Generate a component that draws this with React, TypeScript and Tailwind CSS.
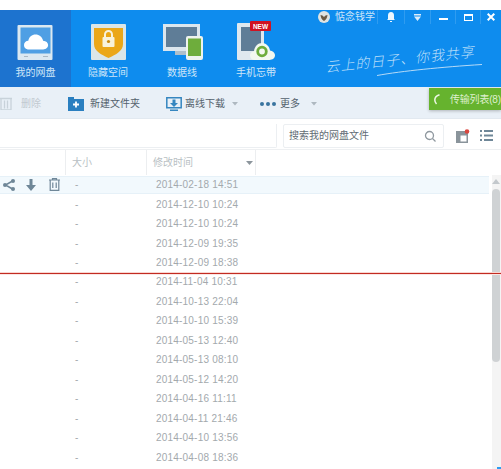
const rows = [
  "2014-02-18 14:51","2014-12-10 10:24","2014-12-10 10:24","2014-12-09 19:35","2014-12-09 18:38",
  "2014-11-04 10:31","2014-10-13 22:04","2014-10-10 15:39","2014-05-13 12:40","2014-05-13 08:10",
  "2014-05-12 14:20","2014-04-16 11:11","2014-04-11 21:46","2014-04-10 13:56","2014-04-08 18:36",
];

function Nav({ label, wide, active, children }: { label: string; wide?: boolean; active?: boolean; children: React.ReactNode }) {
  return (
    <div className={`${wide ? "w-[74px]" : "w-[71px]"} h-[77px] pt-[11px] flex flex-col items-center shrink-0 ${active ? "bg-[#1d73cf]" : ""}`}>
      <svg width="44" height="40" viewBox="0 0 44 40">{children}</svg>
      <div className="mt-[5px] text-[10px] leading-[14px] text-[#cfe6f8]">{label}</div>
    </div>
  );
}

function Caret() {
  return (
    <svg width="6" height="4" viewBox="0 0 6 4" className="shrink-0"><path d="M0 0h6L3 3.500z" fill="#aeb8c0" /></svg>
  );
}

function Ctl({ w, children }: { w: string; children: React.ReactNode }) {
  return <div className={`${w} h-[14px] border-l border-[#2f9cf0] flex items-center justify-center shrink-0`}>{children}</div>;
}

export default function App() {
  return (
    <div className="w-[501px] h-[469px] bg-white overflow-hidden relative flex flex-col" style={{ fontFamily: '"Liberation Sans","Noto Sans CJK SC",sans-serif' }}>
      <div className="h-[10px] shrink-0" />

      <div className="h-[77px] bg-[#0e8cee] flex shrink-0">
        <Nav label="我的网盘" active>
          <rect x="3.500" y="4" width="35" height="35" rx="1" fill="#dbe8f1" />
          <rect x="6.500" y="6.500" width="30" height="26" fill="#4f9fe4" />
          <rect x="10" y="35" width="4" height="1" fill="#a9b8c4" /><rect x="29" y="35" width="5" height="1" fill="#a9b8c4" />
          <path d="M15 28.500c-3.500 0-5-2.300-5-4.500 0-2.500 2-4.200 4.300-4.200 .6-4 3.700-6.300 7.200-6.300 3.800 0 6.800 2.500 7.600 6.200 3 .1 5 2 5 4.400s-2 4.400-5 4.400z" fill="#fff" />
        </Nav>
        <Nav label="隐藏空间" wide>
          <rect x="5" y="3" width="35" height="36" rx="1" fill="#dbe6e8" />
          <path d="M8 7h29v16c0 7-7 10.500-14.500 14C15 33.500 8 30 8 23z" fill="#eba718" />
          <rect x="16.500" y="16" width="12" height="10" rx="1" fill="#f8f2dc" />
          <path d="M19 16v-2.500a3.500 3.500 0 0 1 7 0V16" fill="none" stroke="#f8f2dc" strokeWidth="2" />
          <circle cx="22.500" cy="20.500" r="1.600" fill="#c98a10" />
        </Nav>
        <Nav label="数据线" wide>
          <rect x="3" y="3" width="37" height="27" fill="#dbe6ee" />
          <rect x="6" y="6" width="31" height="20" fill="#5f7d97" />
          <rect x="15" y="30" width="11" height="4" fill="#aebfcb" />
          <rect x="26" y="15" width="17" height="24" rx="2" fill="#eef3ee" />
          <rect x="28" y="17.500" width="13" height="17.500" fill="#6ead3c" />
        </Nav>
        <Nav label="手机忘带" wide>
          <rect x="3" y="2" width="27" height="37" rx="1" fill="#dfe8ef" />
          <rect x="7" y="6" width="20" height="24" fill="#5f7d97" />
          <path d="M21 39c-3 0-5-2-5-4.500s2-4 4-4.200c.5-5 4-8.300 8-8.300s7.500 3.300 8 7.500c2.500 .3 5 2 5 4.800S38.500 39 35.500 39z" fill="#f3f8ef" />
          <circle cx="28" cy="30.500" r="4.300" fill="none" stroke="#6ead3c" strokeWidth="2.800" />
          <rect x="16" y="0" width="21" height="10" rx="1" fill="#cf1322" />
          <text x="26.500" y="7.500" textAnchor="middle" fontSize="6.500" fontWeight="700" fill="#fff" fontFamily="Liberation Sans, sans-serif">NEW</text>
        </Nav>

        <div className="flex-1 flex flex-col min-w-0">
          <div className="h-[14px] flex items-center">
            <div className="w-[84px] pl-[25px] flex items-center gap-[5px] shrink-0">
              <svg width="12" height="12" viewBox="0 0 12 12" className="shrink-0">
                <circle cx="6" cy="6" r="6" fill="#dfe3e2" /><path d="M6 1.500v9M2.500 4c1.500 0 2.500.8 3.500 2 1-1.200 2-2 3.500-2-.3 3-1.500 5-3.500 6-2-1-3.200-3-3.500-6z" fill="#6b5a45" />
              </svg>
              <span className="text-[10px] leading-[14px] text-[#c9e4f9] whitespace-nowrap">惦念钱学</span>
            </div>
            <Ctl w="w-[27px]">
              <svg width="8" height="10" viewBox="0 0 8 10" fill="#eef7fe"><path d="M4 0c2 0 3 1.500 3 3.500V7l1 1H0l1-1V3.500C1 1.500 2 0 4 0zM3 9h2v1H3z" /></svg>
            </Ctl>
            <Ctl w="w-[26px]">
              <svg width="7" height="7" viewBox="0 0 7 7" fill="#dcedfb"><path d="M0 0h7v1.500H0zM0 2.500h7L3.500 7z" /></svg>
            </Ctl>
            <Ctl w="w-[25px]"><div className="w-[9px] h-[2px] mt-[4px] bg-white" /></Ctl>
            <Ctl w="w-[25px]"><div className="w-[9px] h-[7px] border border-t-2 border-white" /></Ctl>
            <Ctl w="w-[21px]">
              <svg width="8" height="8" viewBox="0 0 8 8" stroke="#fff" strokeWidth="2"><path d="M.7.7l6.600 6.600M7.300.7L.7 7.300" /></svg>
            </Ctl>
          </div>
          <div className="mt-[24px] ml-[32px] h-[20px] text-[14px] leading-[20px] font-light italic text-[#bcdff9] -rotate-[6deg] tracking-[1px] whitespace-nowrap">云上的日子、你我共享</div>
          <svg className="block mt-[-4px] ml-[84px]" width="106" height="12" viewBox="0 0 106 12">
            <path d="M0 11.500C25 7 65 3 105 .5" fill="none" stroke="#b5daf7" strokeWidth="1" />
          </svg>
        </div>
      </div>

      <div className="h-[32px] pt-[2px] bg-[#e9f0f7] flex items-center shrink-0 border-b border-[#e2e9f0] text-[10px] text-[#53616c] whitespace-nowrap">
        <svg width="12" height="13" viewBox="0 0 12 13" fill="none" stroke="#c8d2da" strokeWidth="1.300" className="shrink-0">
          <path d="M0 1.500h12M1 1.500V13h10V1.500M4.500 3.500v8M7.500 3.500v8" />
        </svg>
        <span className="ml-[9px] text-[#c1c9d0]">删除</span>
        <svg width="16" height="14" viewBox="0 0 16 14" className="ml-[27px] shrink-0">
          <path d="M0 0h6v2h10v12H0z" fill="#2a7fc0" /><path d="M8 4.500v6M5 7.500h6" stroke="#fff" strokeWidth="1.800" />
        </svg>
        <span className="ml-[6px]">新建文件夹</span>
        <svg width="16" height="14" viewBox="0 0 16 14" fill="none" className="ml-[26px] shrink-0">
          <path d="M.8.800h14.400v10H.8zM4 13.300h8" stroke="#3586c0" strokeWidth="1.500" /><path d="M6.500 2.500h3v3.500H12L8 10 4 6h2.500z" fill="#3586c0" />
        </svg>
        <span className="ml-[3px]">离线下载</span>
        <span className="ml-[7px]"><Caret /></span>
        <div className="ml-[22px] flex gap-[2px] shrink-0">
          <div className="w-[4px] h-[4px] rounded-full bg-[#39749f]" /><div className="w-[4px] h-[4px] rounded-full bg-[#39749f]" /><div className="w-[4px] h-[4px] rounded-full bg-[#39749f]" />
        </div>
        <span className="ml-[4px]">更多</span>
        <span className="ml-[11px]"><Caret /></span>
        <div className="ml-auto self-start -mt-[1px] w-[72px] h-[22px] bg-[#66b32e] flex items-center shadow-[0_1px_3px_rgba(0,0,0,0.25)] shrink-0">
          <svg width="6" height="11" viewBox="0 0 6 11" fill="none" stroke="#eef7e6" strokeWidth="1.500" className="ml-[5px] shrink-0"><path d="M5.500.8C2 2 .8 4 .8 6s.7 3 1.700 4" /></svg>
          <span className="ml-[10px] text-[#dff0d0] tracking-[-0.2px]">传输列表(8)</span>
        </div>
      </div>

      <div className="h-[31px] pt-[3px] flex items-center shrink-0 border-b border-[#eef0f2]">
        <div className="w-[277px] h-[24px] border-r border-b border-[#eceff2] rounded-br-[2px] shrink-0" />
        <div className="ml-[6px] w-[161px] h-[24px] border border-[#eceff2] rounded-[2px] flex items-center justify-between pl-[5px] pr-[7px] shrink-0">
          <span className="text-[10px] text-[#626c74] whitespace-nowrap">搜索我的网盘文件</span>
          <svg width="12" height="12" viewBox="0 0 12 12" fill="none" stroke="#8f989f" strokeWidth="1.300">
            <circle cx="5.500" cy="5.500" r="4" /><path d="M8.500 8.500l3 3" />
          </svg>
        </div>
        <svg width="14" height="14" viewBox="0 0 14 14" className="ml-[12px] shrink-0">
          <path d="M0 2h12v12H0z" fill="#8a949b" /><path d="M4.500 6.500H10.500V12.500H4.500z" fill="#fff" />
          <circle cx="11" cy="2.500" r="2.300" fill="#d9463e" />
        </svg>
        <svg width="13" height="11" viewBox="0 0 13 11" fill="#6f8798" className="ml-[10px] shrink-0">
          <path d="M0 0h2v2H0zM4 0h9v2H4zM0 4.500h2v2H0zM4 4.500h9v2H4zM0 9h2v2H0zM4 9h9v2H4z" />
        </svg>
      </div>

      <div className="flex-1 flex min-h-0">
        <div className="w-[492px] shrink-0 flex flex-col min-w-0">
          <div className="h-[25px] grid grid-cols-[65px_81px_110px] text-[10px] leading-[14px] text-[#b9bfc4] shrink-0">
            <div />
            <div className="border-l border-[#eceef0] pl-[6px] flex items-center">大小</div>
            <div className="border-l border-[#eceef0] border-r pl-[6px] pr-[2px] flex items-center justify-between">
              修改时间
              <svg width="7" height="4" viewBox="0 0 7 4"><path d="M0 0h7L3.500 4z" fill="#8c959c" /></svg>
            </div>
          </div>
          {rows.map((d, i) => (
            <div key={i} className="h-[19.460px] flex items-center shrink-0">
              <div className={`w-[489px] h-[18px] grid grid-cols-[65px_81px_110px] items-center text-[10px] text-[#a3a9ad] ${i === 0 ? "bg-[#f2f9fd] border-y border-[#e6f1f8]" : ""}`}>
                <div className="flex items-center pl-[3px]">
                  {i === 0 && (
                    <>
                      <svg width="12" height="12" viewBox="0 0 12 12" fill="#6f8798" className="shrink-0">
                        <path d="M9.500 2L2.500 6l7 4" fill="none" stroke="#6f8798" strokeWidth="1.500" /><circle cx="10" cy="2" r="2" /><circle cx="2" cy="6" r="2" /><circle cx="10" cy="10" r="2" />
                      </svg>
                      <svg width="10" height="12" viewBox="0 0 10 12" fill="#6f8798" className="ml-[11px] shrink-0"><path d="M3.500 0h3v6H10l-5 6-5-6h3.500z" /></svg>
                      <svg width="11" height="13" viewBox="0 0 11 13" fill="none" stroke="#6f8798" strokeWidth="1.200" className="ml-[13px] shrink-0"><path d="M0 2h11M3.500 2V.6h4V2M1.200 2v10.400h8.600V2M3.800 4.500v5.500M7.200 4.500v5.500" /></svg>
                    </>
                  )}
                </div>
                <span className="pl-[10px]">-</span>
                <span className="pl-[10px] whitespace-nowrap tracking-[0.2px]">{d}</span>
              </div>
            </div>
          ))}
        </div>
        <div className="flex-1 flex flex-col">
          <div className="h-[25px] shrink-0" />
          <div className="flex-1 flex flex-col items-center bg-[#f4f4f4] pr-[1px]">
            <svg width="8" height="5" viewBox="0 0 8 5" className="mt-[4px] shrink-0"><path d="M4 0l4 5H0z" fill="#c3c8cc" /></svg>
            <div className="mt-[5px] w-full h-[173px] rounded-[4px] bg-[#cfd2d4]" />
          </div>
        </div>
      </div>

      <div className="absolute left-0 top-[273px] w-full h-px bg-[#c22b22] shadow-[0_-1px_0_#f8d6d1,0_1px_0_#fbe6e3]" />
      <div className="absolute right-0 bottom-0 w-[4px] h-[2px] bg-[#2f9cf0]" />
    </div>
  );
}
